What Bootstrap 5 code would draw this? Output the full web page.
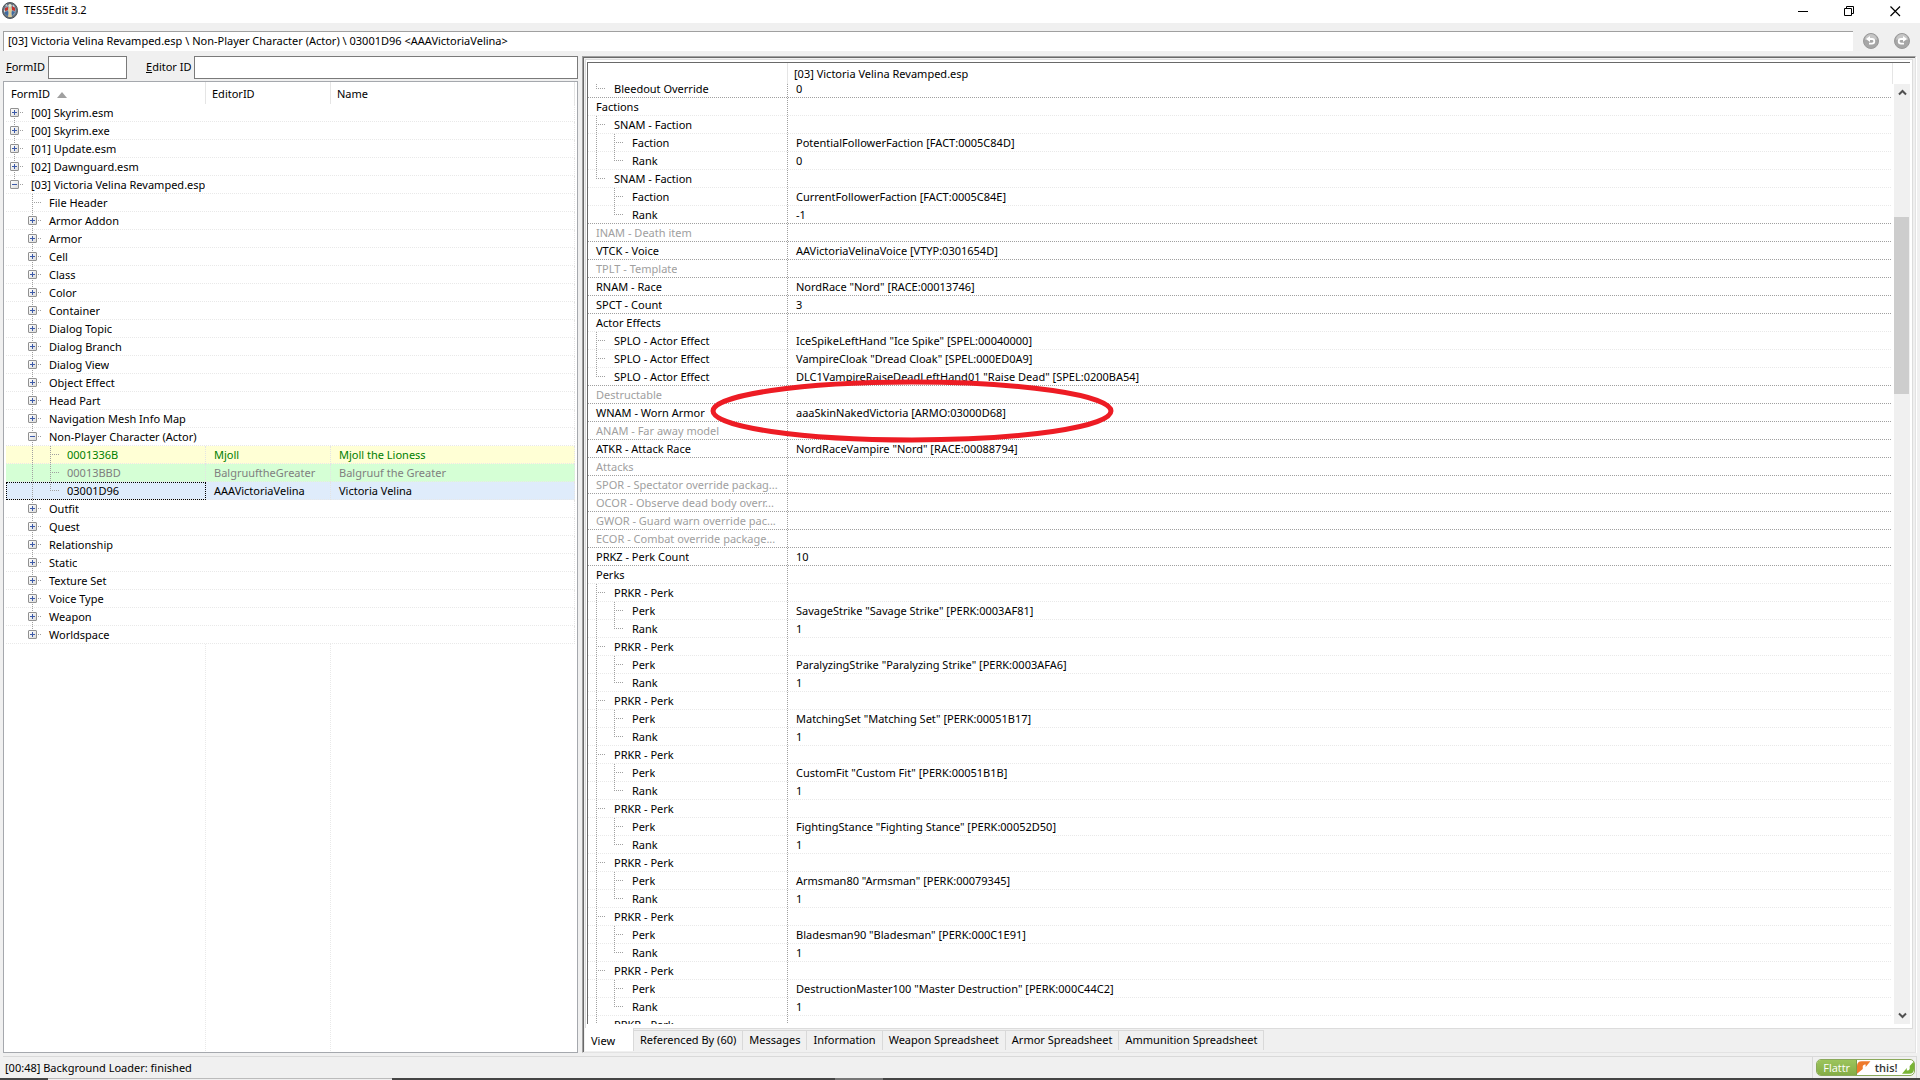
<!DOCTYPE html>
<html lang="en">
<head>
<meta charset="utf-8">
<meta name="viewport" content="width=device-width, initial-scale=1">
<title>TES5Edit 3.2</title>
<link href="https://cdn.jsdelivr.net/npm/bootstrap@5.3.0/dist/css/bootstrap.min.css" rel="stylesheet">
<style>
:root{--face:#f0f0f0;--guide:#a0a0a0;--pale:#e9e9e9}
body{font-family:"Noto Sans","Open Sans",sans-serif;font-size:11px;line-height:18px;color:#000;background:var(--face)}
button,input{font:inherit;color:inherit}
button{border:0;padding:0;background:none}
input{border-radius:0;outline:0}
a{color:inherit;text-decoration:none}
/* title bar */
.titlebar{height:23px;padding:0 2px 2px}
.titlebar h1{font-size:11px;line-height:18px;padding-left:6px}
.win-btn{width:46px;height:20px}
/* path bar */
.pathbar{padding:8px 10px 5px 3px}
.path-box{height:20px;border:1px solid var(--guide);border-width:1px 0 0 1px;background:#fff;padding:0 4px 2px}
.nav-tools{gap:15px;padding-left:10px}
/* main */
.workarea{padding:0 4px 0 3px;gap:4px}
.side{width:575px}
.filters{height:23px;padding-left:3px;margin-bottom:2px}
.filters input{height:23px;border:1px solid #7a7a7a;background:#fff;padding:0 4px}
.lab-form{width:42px}.lab-editor{width:48px;margin-left:19px}
.in-form{width:79px}
.tree-box{border:1px solid #a5a8ad;background:#fff;padding:0 2px}
.tree-body{background:
 linear-gradient(#fff,#fff) 0 0/100% 22px no-repeat,
 repeating-linear-gradient(var(--pale) 0 1px,#fff 1px 2px) 199px 0/1px 100% no-repeat,
 repeating-linear-gradient(var(--pale) 0 1px,#fff 1px 2px) 324px 0/1px 100% no-repeat}
/* grids */
.grid{width:100%;table-layout:fixed;border-collapse:separate;border-spacing:0}
.grid td{height:18px;padding:0 0 0 8px;white-space:nowrap;overflow:hidden;text-overflow:ellipsis;
 background-image:repeating-linear-gradient(90deg,var(--pale) 0 1px,transparent 1px 2px);background-size:100% 1px;background-position:0 100%;background-repeat:no-repeat}
.grid td:first-child{padding:0}
.grid th{font-weight:400;padding:2px 0 0 6px;border-right:1px solid #e5e5e5}
.tree th{height:22px}
.tree th:first-child{padding-left:5px}
.tree td[colspan]{background-color:#fff}
.tree td{border-right:1px dotted #e4e4e4}
.cellx{height:18px}
.cellx>span{padding-left:8px;overflow:hidden;text-overflow:ellipsis}
.tree .cellx>span{padding-left:7px}
.gd{flex:0 0 18px;height:18px;position:relative;background-repeat:no-repeat}
.gd.v,.gd.t,.gd.l{--vl:repeating-linear-gradient(var(--guide) 0 1px,transparent 1px 2px)}
.gd.h,.gd.t,.gd.l{--hl:repeating-linear-gradient(90deg,var(--guide) 0 1px,transparent 1px 2px)}
.gd.v{background-image:var(--vl);background-size:1px 18px;background-position:8px 0}
.gd.t{background-image:var(--vl),var(--hl);background-size:1px 18px,10px 1px;background-position:8px 0,100% 8px}
.gd.l{background-image:var(--vl),var(--hl);background-size:1px 9px,10px 1px;background-position:8px 0,100% 8px}
.gd.s{background-image:repeating-linear-gradient(var(--guide) 0 1px,transparent 1px 2px),repeating-linear-gradient(90deg,var(--guide) 0 1px,transparent 1px 2px);background-size:1px 10px,10px 1px;background-position:8px 100%,100% 8px}
.tg{display:block;width:9px;height:9px;margin:4px;border:1px solid #919191;border-radius:1px;
 background:linear-gradient(#3c5aa8,#3c5aa8) 50% 50%/5px 1px no-repeat,linear-gradient(135deg,#fff,#dcdcdc)}
.tg.plus{background:linear-gradient(#3c5aa8,#3c5aa8) 50% 50%/5px 1px no-repeat,linear-gradient(#3c5aa8,#3c5aa8) 50% 50%/1px 5px no-repeat,linear-gradient(135deg,#fff,#dcdcdc)}
.row-new td{background-color:#ffffd5;color:#008000}
.row-same td{background-color:#d5ffd5;color:#808080}
.row-sel td{background-color:#dfecfb}
.row-sel td:first-child{outline:1px dotted #000;outline-offset:-1px}
/* record view */
.deck{border:1px solid;border-color:#a0a0a0 #e3e3e3 #e3e3e3 #a0a0a0;box-shadow:inset 1px 1px 0 #696969,1px 1px 0 #fff;padding:2px 2px 0 1px}
.pane{border:1px solid #dcdcdc;background:#fff;padding:2px 2px 4px 1px;margin-left:1px}
.sheet{border:solid #696969;border-width:1px 0 0 1px}
.col-head{height:21px;line-height:21px}
.col-head>div:first-child{width:200px;border-right:1px solid #e5e5e5}
.col-head>div:last-child{padding-left:6px;border-right:1px solid #e5e5e5;margin-right:17px}
.viewport{position:relative;min-height:0}
.rec{margin-top:-4px}
.rec td:first-child{background-image:repeating-linear-gradient(90deg,var(--pale) 0 1px,transparent 1px 2px),repeating-linear-gradient(var(--guide) 0 1px,transparent 1px 2px);background-size:100% 1px,1px 100%;background-position:0 100%,100% 0;padding-right:4px}
.rec tr.e td{background-image:repeating-linear-gradient(90deg,var(--guide) 0 1px,transparent 1px 2px)}
.rec tr.e td:first-child{background-image:repeating-linear-gradient(90deg,var(--guide) 0 1px,transparent 1px 2px),repeating-linear-gradient(var(--guide) 0 1px,transparent 1px 2px)}
.ghost{color:#a0a0a0}
.ring{position:absolute;left:120px;top:293px}
.vbar{width:16px;margin-left:2px;background:var(--face)}
.vbar button{height:17px}
.thumb{height:177px;margin:116px 1px 0 0;background:#cdcdcd}
/* tabs */
.tabstrip{height:23px;padding-left:1px}
.tabstrip button{height:20px;margin-top:1px;padding:0 6px 2px;border-top:1px solid #d9d9d9;border-right:1px solid #d9d9d9}
.tabstrip button.active{height:23px;margin-top:-1px;padding:3px 0 0 6px;width:49px;background:#fff;border-top:0;text-align:left;position:relative}
/* status */
.status{height:22px;margin:3px 3px 0;border-top:1px solid #d9d9d9;padding-left:2px}
.status-text{padding-top:2px}
.flattr-cell{border:solid #d9d9d9;border-width:0 1px;padding:0 1px 0 3px}
.flattr{width:99px;height:17px;border:1px solid #8aa95a;border-radius:5px;background:#fff;font-family:"Open Sans",sans-serif;line-height:15px}
.flattr b{width:42px;font-weight:400;background:linear-gradient(#9cc45c,#84ad45);color:#fff;border-right:1px solid #7c9d47}
.flattr em{font-style:normal;font-weight:600;color:#333}
.taskedge{height:2px;background:#454545}
.taskedge i{margin-left:48px;width:344px;background:#efefef;border-top:1px solid #bbb}
.taskedge i+i{margin-left:443px;width:48px;background:#777;border:0}
</style>
</head>
<body class="d-flex flex-column vh-100 overflow-hidden">
<header class="titlebar d-flex align-items-center bg-white">
 <svg width="16" height="17" viewBox="0 0 16 17" aria-hidden="true"><ellipse cx="8" cy="8.500" rx="7.500" ry="8" fill="#66707a" stroke="#4e5358"/><circle cx="8" cy="8.500" r="6" fill="#8f9fae"/><path d="M3 6l3-1v3l-3 1zM10 4l3 2v3l-3-1z" fill="#c6302c"/><path d="M3 10l3-1v5l-3-2zM10 9l3 1-3 4z" fill="#3f6a9f"/><path d="M3 3.500l2-1.500v2zM11 2.500l2 2-2 .5zM2 8h1v2H2z" fill="#c9d2d8"/><path d="M7 5h2l1 3-1 3 1 4H6l1-4-1-3z" fill="#dccb98"/><circle cx="8" cy="3.500" r="1.500" fill="#f0e8cc"/></svg>
 <h1 class="m-0 fw-normal flex-grow-1">TES5Edit 3.2</h1>
 <button class="win-btn" aria-label="Minimize"><svg width="11" height="11"><path d="M0 5.500h10" stroke="#000"/></svg></button>
 <button class="win-btn" aria-label="Restore"><svg width="11" height="11" fill="none" stroke="#000"><path d="M.5 2.500h7v7h-7zM2.500 2.500v-2h7v7h-2"/></svg></button>
 <button class="win-btn" aria-label="Close"><svg width="11" height="11"><path d="M.5.500l9.500 9.500M10 .5L.5 10" stroke="#000" stroke-width="1.200"/></svg></button>
</header>

<nav class="pathbar d-flex align-items-center" aria-label="Record path">
 <input class="path-box flex-grow-1" readonly aria-label="Path" value="[03] Victoria Velina Revamped.esp \ Non-Player Character (Actor) \ 03001D96 &lt;AAAVictoriaVelina&gt;">
 <div class="nav-tools d-flex">
  <button class="d-flex" aria-label="Back"><svg width="16" height="16" viewBox="0 0 16 16"><circle cx="8" cy="8" r="7.500" fill="#a6a6a6" stroke="#999"/><path d="M2 7a6 6 0 0 1 12 0q-6-3-12 0z" fill="#c6c6c6"/><path d="M5.500 6H9a2.300 2.300 0 0 1 0 4.600H6" fill="none" stroke="#fff" stroke-width="1.800"/><path d="M3 6l4-3v6z" fill="#fff"/></svg></button>
  <button class="d-flex" aria-label="Forward"><svg width="16" height="16" viewBox="0 0 16 16"><circle cx="8" cy="8" r="7.500" fill="#a6a6a6" stroke="#999"/><path d="M2 7a6 6 0 0 1 12 0q-6-3-12 0z" fill="#c6c6c6"/><path d="M10.500 6H7a2.300 2.300 0 0 0 0 4.600h3" fill="none" stroke="#fff" stroke-width="1.800"/><path d="M13 6L9 3v6z" fill="#fff"/></svg></button>
 </div>
</nav>

<main class="workarea d-flex flex-grow-1 overflow-hidden">
 <section class="side d-flex flex-column flex-shrink-0">
  <form class="filters d-flex align-items-center">
   <label class="lab-form" for="fid"><u>F</u>ormID</label><input id="fid" class="in-form">
   <label class="lab-editor" for="eid"><u>E</u>ditor ID</label><input id="eid" class="flex-grow-1">
  </form>
  <div class="tree-box flex-grow-1 overflow-hidden">
   <div class="tree-body h-100">
   <table class="grid tree">
    <colgroup><col style="width:200px"><col style="width:125px"><col></colgroup>
    <thead><tr><th>FormID <svg class="ms-1" width="10" height="6" viewBox="0 0 10 6"><path d="M0 6l5-6 5 6z" fill="#a0a0a0"/></svg></th><th>EditorID</th><th>Name</th></tr></thead>
    <tbody>
    <tr><td colspan="3"><div class="cellx d-flex"><i class="gd s"><button class="tg plus" aria-label="Expand"></button></i><span>[00] Skyrim.esm</span></div></td></tr>
    <tr><td colspan="3"><div class="cellx d-flex"><i class="gd t"><button class="tg plus" aria-label="Expand"></button></i><span>[00] Skyrim.exe</span></div></td></tr>
    <tr><td colspan="3"><div class="cellx d-flex"><i class="gd t"><button class="tg plus" aria-label="Expand"></button></i><span>[01] Update.esm</span></div></td></tr>
    <tr><td colspan="3"><div class="cellx d-flex"><i class="gd t"><button class="tg plus" aria-label="Expand"></button></i><span>[02] Dawnguard.esm</span></div></td></tr>
    <tr><td colspan="3"><div class="cellx d-flex"><i class="gd l"><button class="tg" aria-label="Collapse"></button></i><span>[03] Victoria Velina Revamped.esp</span></div></td></tr>
    <tr><td colspan="3"><div class="cellx d-flex"><i class="gd"></i><i class="gd t"></i><span>File Header</span></div></td></tr>
    <tr><td colspan="3"><div class="cellx d-flex"><i class="gd"></i><i class="gd t"><button class="tg plus" aria-label="Expand"></button></i><span>Armor Addon</span></div></td></tr>
    <tr><td colspan="3"><div class="cellx d-flex"><i class="gd"></i><i class="gd t"><button class="tg plus" aria-label="Expand"></button></i><span>Armor</span></div></td></tr>
    <tr><td colspan="3"><div class="cellx d-flex"><i class="gd"></i><i class="gd t"><button class="tg plus" aria-label="Expand"></button></i><span>Cell</span></div></td></tr>
    <tr><td colspan="3"><div class="cellx d-flex"><i class="gd"></i><i class="gd t"><button class="tg plus" aria-label="Expand"></button></i><span>Class</span></div></td></tr>
    <tr><td colspan="3"><div class="cellx d-flex"><i class="gd"></i><i class="gd t"><button class="tg plus" aria-label="Expand"></button></i><span>Color</span></div></td></tr>
    <tr><td colspan="3"><div class="cellx d-flex"><i class="gd"></i><i class="gd t"><button class="tg plus" aria-label="Expand"></button></i><span>Container</span></div></td></tr>
    <tr><td colspan="3"><div class="cellx d-flex"><i class="gd"></i><i class="gd t"><button class="tg plus" aria-label="Expand"></button></i><span>Dialog Topic</span></div></td></tr>
    <tr><td colspan="3"><div class="cellx d-flex"><i class="gd"></i><i class="gd t"><button class="tg plus" aria-label="Expand"></button></i><span>Dialog Branch</span></div></td></tr>
    <tr><td colspan="3"><div class="cellx d-flex"><i class="gd"></i><i class="gd t"><button class="tg plus" aria-label="Expand"></button></i><span>Dialog View</span></div></td></tr>
    <tr><td colspan="3"><div class="cellx d-flex"><i class="gd"></i><i class="gd t"><button class="tg plus" aria-label="Expand"></button></i><span>Object Effect</span></div></td></tr>
    <tr><td colspan="3"><div class="cellx d-flex"><i class="gd"></i><i class="gd t"><button class="tg plus" aria-label="Expand"></button></i><span>Head Part</span></div></td></tr>
    <tr><td colspan="3"><div class="cellx d-flex"><i class="gd"></i><i class="gd t"><button class="tg plus" aria-label="Expand"></button></i><span>Navigation Mesh Info Map</span></div></td></tr>
    <tr><td colspan="3"><div class="cellx d-flex"><i class="gd"></i><i class="gd t"><button class="tg" aria-label="Collapse"></button></i><span>Non-Player Character (Actor)</span></div></td></tr>
    <tr class="row-new"><td><div class="cellx d-flex"><i class="gd"></i><i class="gd v"></i><i class="gd t"></i><span>0001336B</span></div></td><td>Mjoll</td><td>Mjoll the Lioness</td></tr>
    <tr class="row-same"><td><div class="cellx d-flex"><i class="gd"></i><i class="gd v"></i><i class="gd t"></i><span>00013BBD</span></div></td><td>BalgruuftheGreater</td><td>Balgruuf the Greater</td></tr>
    <tr class="row-sel"><td><div class="cellx d-flex"><i class="gd"></i><i class="gd v"></i><i class="gd l"></i><span>03001D96</span></div></td><td>AAAVictoriaVelina</td><td>Victoria Velina</td></tr>
    <tr><td colspan="3"><div class="cellx d-flex"><i class="gd"></i><i class="gd t"><button class="tg plus" aria-label="Expand"></button></i><span>Outfit</span></div></td></tr>
    <tr><td colspan="3"><div class="cellx d-flex"><i class="gd"></i><i class="gd t"><button class="tg plus" aria-label="Expand"></button></i><span>Quest</span></div></td></tr>
    <tr><td colspan="3"><div class="cellx d-flex"><i class="gd"></i><i class="gd t"><button class="tg plus" aria-label="Expand"></button></i><span>Relationship</span></div></td></tr>
    <tr><td colspan="3"><div class="cellx d-flex"><i class="gd"></i><i class="gd t"><button class="tg plus" aria-label="Expand"></button></i><span>Static</span></div></td></tr>
    <tr><td colspan="3"><div class="cellx d-flex"><i class="gd"></i><i class="gd t"><button class="tg plus" aria-label="Expand"></button></i><span>Texture Set</span></div></td></tr>
    <tr><td colspan="3"><div class="cellx d-flex"><i class="gd"></i><i class="gd t"><button class="tg plus" aria-label="Expand"></button></i><span>Voice Type</span></div></td></tr>
    <tr><td colspan="3"><div class="cellx d-flex"><i class="gd"></i><i class="gd t"><button class="tg plus" aria-label="Expand"></button></i><span>Weapon</span></div></td></tr>
    <tr><td colspan="3"><div class="cellx d-flex"><i class="gd"></i><i class="gd l"><button class="tg plus" aria-label="Expand"></button></i><span>Worldspace</span></div></td></tr>
    </tbody>
   </table>
   </div>
  </div>
 </section>

 <section class="deck d-flex flex-column flex-grow-1 overflow-hidden">
  <div class="pane d-flex flex-column flex-grow-1 overflow-hidden">
   <div class="sheet d-flex flex-column flex-grow-1 overflow-hidden">
    <div class="col-head d-flex flex-shrink-0"><div></div><div class="flex-grow-1">[03] Victoria Velina Revamped.esp</div></div>
    <div class="viewport d-flex flex-grow-1 overflow-hidden">
     <div class="flex-grow-1">
     <table class="grid rec">
      <colgroup><col style="width:200px"><col></colgroup>
      <tbody>
      <tr class="e"><td><div class="cellx d-flex"><i class="gd l"></i><span>Bleedout Override</span></div></td><td>0</td></tr>
      <tr><td><div class="cellx d-flex"><span>Factions</span></div></td><td></td></tr>
      <tr><td><div class="cellx d-flex"><i class="gd t"></i><span>SNAM - Faction</span></div></td><td></td></tr>
      <tr><td><div class="cellx d-flex"><i class="gd v"></i><i class="gd t"></i><span>Faction</span></div></td><td>PotentialFollowerFaction [FACT:0005C84D]</td></tr>
      <tr><td><div class="cellx d-flex"><i class="gd v"></i><i class="gd l"></i><span>Rank</span></div></td><td>0</td></tr>
      <tr><td><div class="cellx d-flex"><i class="gd l"></i><span>SNAM - Faction</span></div></td><td></td></tr>
      <tr><td><div class="cellx d-flex"><i class="gd"></i><i class="gd t"></i><span>Faction</span></div></td><td>CurrentFollowerFaction [FACT:0005C84E]</td></tr>
      <tr class="e"><td><div class="cellx d-flex"><i class="gd"></i><i class="gd l"></i><span>Rank</span></div></td><td>-1</td></tr>
      <tr class="e ghost"><td><div class="cellx d-flex"><span>INAM - Death item</span></div></td><td></td></tr>
      <tr class="e"><td><div class="cellx d-flex"><span>VTCK - Voice</span></div></td><td>AAVictoriaVelinaVoice [VTYP:0301654D]</td></tr>
      <tr class="e ghost"><td><div class="cellx d-flex"><span>TPLT - Template</span></div></td><td></td></tr>
      <tr class="e"><td><div class="cellx d-flex"><span>RNAM - Race</span></div></td><td>NordRace "Nord" [RACE:00013746]</td></tr>
      <tr class="e"><td><div class="cellx d-flex"><span>SPCT - Count</span></div></td><td>3</td></tr>
      <tr><td><div class="cellx d-flex"><span>Actor Effects</span></div></td><td></td></tr>
      <tr><td><div class="cellx d-flex"><i class="gd t"></i><span>SPLO - Actor Effect</span></div></td><td>IceSpikeLeftHand "Ice Spike" [SPEL:00040000]</td></tr>
      <tr><td><div class="cellx d-flex"><i class="gd t"></i><span>SPLO - Actor Effect</span></div></td><td>VampireCloak "Dread Cloak" [SPEL:000ED0A9]</td></tr>
      <tr class="e"><td><div class="cellx d-flex"><i class="gd l"></i><span>SPLO - Actor Effect</span></div></td><td>DLC1VampireRaiseDeadLeftHand01 "Raise Dead" [SPEL:0200BA54]</td></tr>
      <tr class="e ghost"><td><div class="cellx d-flex"><span>Destructable</span></div></td><td></td></tr>
      <tr class="e"><td><div class="cellx d-flex"><span>WNAM - Worn Armor</span></div></td><td>aaaSkinNakedVictoria [ARMO:03000D68]</td></tr>
      <tr class="e ghost"><td><div class="cellx d-flex"><span>ANAM - Far away model</span></div></td><td></td></tr>
      <tr class="e"><td><div class="cellx d-flex"><span>ATKR - Attack Race</span></div></td><td>NordRaceVampire "Nord" [RACE:00088794]</td></tr>
      <tr class="e ghost"><td><div class="cellx d-flex"><span>Attacks</span></div></td><td></td></tr>
      <tr class="e ghost"><td><div class="cellx d-flex"><span>SPOR - Spectator override packag...</span></div></td><td></td></tr>
      <tr class="e ghost"><td><div class="cellx d-flex"><span>OCOR - Observe dead body overr...</span></div></td><td></td></tr>
      <tr class="e ghost"><td><div class="cellx d-flex"><span>GWOR - Guard warn override pac...</span></div></td><td></td></tr>
      <tr class="e ghost"><td><div class="cellx d-flex"><span>ECOR - Combat override package...</span></div></td><td></td></tr>
      <tr class="e"><td><div class="cellx d-flex"><span>PRKZ - Perk Count</span></div></td><td>10</td></tr>
      <tr><td><div class="cellx d-flex"><span>Perks</span></div></td><td></td></tr>
      <tr><td><div class="cellx d-flex"><i class="gd t"></i><span>PRKR - Perk</span></div></td><td></td></tr>
      <tr><td><div class="cellx d-flex"><i class="gd v"></i><i class="gd t"></i><span>Perk</span></div></td><td>SavageStrike "Savage Strike" [PERK:0003AF81]</td></tr>
      <tr><td><div class="cellx d-flex"><i class="gd v"></i><i class="gd l"></i><span>Rank</span></div></td><td>1</td></tr>
      <tr><td><div class="cellx d-flex"><i class="gd t"></i><span>PRKR - Perk</span></div></td><td></td></tr>
      <tr><td><div class="cellx d-flex"><i class="gd v"></i><i class="gd t"></i><span>Perk</span></div></td><td>ParalyzingStrike "Paralyzing Strike" [PERK:0003AFA6]</td></tr>
      <tr><td><div class="cellx d-flex"><i class="gd v"></i><i class="gd l"></i><span>Rank</span></div></td><td>1</td></tr>
      <tr><td><div class="cellx d-flex"><i class="gd t"></i><span>PRKR - Perk</span></div></td><td></td></tr>
      <tr><td><div class="cellx d-flex"><i class="gd v"></i><i class="gd t"></i><span>Perk</span></div></td><td>MatchingSet "Matching Set" [PERK:00051B17]</td></tr>
      <tr><td><div class="cellx d-flex"><i class="gd v"></i><i class="gd l"></i><span>Rank</span></div></td><td>1</td></tr>
      <tr><td><div class="cellx d-flex"><i class="gd t"></i><span>PRKR - Perk</span></div></td><td></td></tr>
      <tr><td><div class="cellx d-flex"><i class="gd v"></i><i class="gd t"></i><span>Perk</span></div></td><td>CustomFit "Custom Fit" [PERK:00051B1B]</td></tr>
      <tr><td><div class="cellx d-flex"><i class="gd v"></i><i class="gd l"></i><span>Rank</span></div></td><td>1</td></tr>
      <tr><td><div class="cellx d-flex"><i class="gd t"></i><span>PRKR - Perk</span></div></td><td></td></tr>
      <tr><td><div class="cellx d-flex"><i class="gd v"></i><i class="gd t"></i><span>Perk</span></div></td><td>FightingStance "Fighting Stance" [PERK:00052D50]</td></tr>
      <tr><td><div class="cellx d-flex"><i class="gd v"></i><i class="gd l"></i><span>Rank</span></div></td><td>1</td></tr>
      <tr><td><div class="cellx d-flex"><i class="gd t"></i><span>PRKR - Perk</span></div></td><td></td></tr>
      <tr><td><div class="cellx d-flex"><i class="gd v"></i><i class="gd t"></i><span>Perk</span></div></td><td>Armsman80 "Armsman" [PERK:00079345]</td></tr>
      <tr><td><div class="cellx d-flex"><i class="gd v"></i><i class="gd l"></i><span>Rank</span></div></td><td>1</td></tr>
      <tr><td><div class="cellx d-flex"><i class="gd t"></i><span>PRKR - Perk</span></div></td><td></td></tr>
      <tr><td><div class="cellx d-flex"><i class="gd v"></i><i class="gd t"></i><span>Perk</span></div></td><td>Bladesman90 "Bladesman" [PERK:000C1E91]</td></tr>
      <tr><td><div class="cellx d-flex"><i class="gd v"></i><i class="gd l"></i><span>Rank</span></div></td><td>1</td></tr>
      <tr><td><div class="cellx d-flex"><i class="gd t"></i><span>PRKR - Perk</span></div></td><td></td></tr>
      <tr><td><div class="cellx d-flex"><i class="gd v"></i><i class="gd t"></i><span>Perk</span></div></td><td>DestructionMaster100 "Master Destruction" [PERK:000C44C2]</td></tr>
      <tr><td><div class="cellx d-flex"><i class="gd v"></i><i class="gd l"></i><span>Rank</span></div></td><td>1</td></tr>
      <tr><td><div class="cellx d-flex"><i class="gd t"></i><span>PRKR - Perk</span></div></td><td></td></tr>
      </tbody>
     </table>
     </div>
     <div class="vbar d-flex flex-column flex-shrink-0">
      <button class="d-flex justify-content-center align-items-center" aria-label="Scroll up"><svg width="9" height="7"><path d="M1 5.500L4.500 2 8 5.500" fill="none" stroke="#505050" stroke-width="2"/></svg></button>
      <div class="thumb"></div>
      <button class="d-flex justify-content-center align-items-center mt-auto" aria-label="Scroll down"><svg width="9" height="7"><path d="M1 1.500L4.500 5 8 1.500" fill="none" stroke="#505050" stroke-width="2"/></svg></button>
     </div>
     <svg class="ring" width="408" height="68" aria-hidden="true"><ellipse cx="204" cy="34" rx="199" ry="29" fill="none" stroke="#ed1c24" stroke-width="5"/></svg>
    </div>
   </div>
  </div>
  <div class="tabstrip d-flex flex-shrink-0" role="tablist">
   <button class="active" role="tab">View</button><button role="tab">Referenced By (60)</button><button role="tab">Messages</button><button role="tab">Information</button><button role="tab">Weapon Spreadsheet</button><button role="tab">Armor Spreadsheet</button><button role="tab">Ammunition Spreadsheet</button>
  </div>
 </section>
</main>

<footer>
 <div class="status d-flex">
  <div class="status-text flex-grow-1">[00:48] Background Loader: finished</div>
  <div class="flattr-cell d-flex align-items-center">
   <a href="#" class="flattr d-flex overflow-hidden"><b class="text-center">Flattr</b>
    <svg width="14" height="15" viewBox="0 0 14 15"><path d="M0 14V6q0-5 5-5h9L9 7V4.500Q7 4 6 6v3z" fill="#ee7a2c"/></svg>
    <em class="px-1">this!</em>
    <svg class="ms-auto" width="13" height="15" viewBox="0 0 13 15"><path d="M12.500 1v8q0 5-5 5H0l5-6v2.500q2 .5 3-1.500V6z" fill="#78b435"/></svg></a>
  </div>
 </div>
 <div class="taskedge d-flex"><i></i><i></i></div>
</footer>
<script src="https://cdn.jsdelivr.net/npm/bootstrap@5.3.0/dist/js/bootstrap.bundle.min.js"></script>
</body>
</html>
